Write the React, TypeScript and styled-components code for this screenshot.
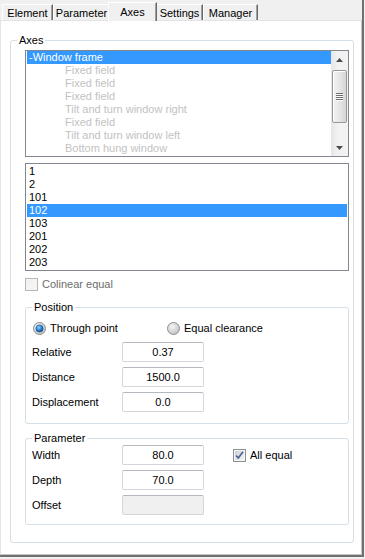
import React from "react";
import styled, { createGlobalStyle } from "styled-components";

const GlobalStyle = createGlobalStyle`
  html, body {
    margin: 0;
    padding: 0;
    background: #f0f0f0;
  }
  body {
    font-family: "Liberation Sans", Arial, sans-serif;
    font-size: 11px;
    color: #000;
  }
`;

interface TreeItem {
  label: string;
  level: number;
}

const treeItems: TreeItem[] = [
  { label: "-Window frame", level: 0 },
  { label: "Fixed field", level: 1 },
  { label: "Fixed field", level: 1 },
  { label: "Fixed field", level: 1 },
  { label: "Tilt and turn window right", level: 1 },
  { label: "Fixed field", level: 1 },
  { label: "Tilt and turn window left", level: 1 },
  { label: "Bottom hung window", level: 1 },
];

const axisNumbers: string[] = ["1", "2", "101", "102", "103", "201", "202", "203"];

const tabs = [
  { label: "Element", width: 51 },
  { label: "Parameter", width: 57 },
  { label: "Axes", width: 46 },
  { label: "Settings", width: 47 },
  { label: "Manager", width: 55 },
];

const Window = styled.div`
  width: 364px;
  height: 557px;
  box-sizing: border-box;
  border-right: 2px solid #707070;
  border-bottom: 2px solid #707070;
  display: flex;
  flex-direction: column;
`;

const TabStrip = styled.div`
  height: 20px;
  padding-left: 2px;
  display: flex;
  align-items: flex-end;
  position: relative;
  z-index: 1;
`;

const Tab = styled.div<{ $active?: boolean; $width: number }>`
  box-sizing: border-box;
  width: ${(p) => (p.$active ? p.$width + 3 : p.$width)}px;
  height: ${(p) => (p.$active ? 19 : 16)}px;
  margin: ${(p) => (p.$active ? "0 -1px -1px -2px" : "0")};
  background: #f0f0f0;
  border-top: 1px solid #fff;
  border-left: 1px solid #fff;
  border-right: 1px solid #6a6a6a;
  box-shadow: inset -1px 0 0 #a0a0a0;
  display: flex;
  align-items: center;
  justify-content: center;
  line-height: 13px;
  padding-top: ${(p) => (p.$active ? 0 : 1)}px;
  position: relative;
  z-index: ${(p) => (p.$active ? 2 : 1)};
`;

const Panel = styled.div`
  flex: 1;
  box-sizing: border-box;
  background: #fff;
  border-top: 1px solid #e3e3e3;
  border-left: 1px solid #e3e3e3;
  border-right: 1px solid #c4c4c4;
  border-bottom: 1px solid #c4c4c4;
  padding: 13px 0 0 9px;
`;

const GroupBox = styled.fieldset<{ $width: number; $pt: number; $pr: number; $pb: number }>`
  width: ${(p) => p.$width}px;
  box-sizing: border-box;
  margin: 0;
  min-width: 0;
  border: 1px solid #d5dfe5;
  border-radius: 3px;
  padding: ${(p) => `${p.$pt}px ${p.$pr}px ${p.$pb}px 6px`};
`;

const Caption = styled.legend`
  padding: 0 2px;
  line-height: 13px;
  font-size: 11px;
  font-weight: normal;
  color: #000;
`;

const AxesBody = styled.div`
  margin-left: 8px;
  display: flex;
  flex-direction: column;
`;

const ListFrame = styled.div<{ $height: number; $pad: number }>`
  box-sizing: border-box;
  height: ${(p) => p.$height}px;
  border: 1px solid #828790;
  background: #fff;
  display: flex;
  padding: ${(p) => `${p.$pad}px 0 0 1px`};
  overflow: hidden;
`;

const ListItems = styled.div`
  flex: 1;
  display: flex;
  flex-direction: column;
`;

const ListRow = styled.div<{ $selected?: boolean; $indent?: number; $muted?: boolean }>`
  height: 13px;
  line-height: 13px;
  padding-left: ${(p) => 2 + (p.$indent || 0)}px;
  background: ${(p) => (p.$selected ? "#3399ff" : "transparent")};
  color: ${(p) => (p.$selected ? "#fff" : p.$muted ? "#c2c2c2" : "#000")};
  white-space: nowrap;
  margin-right: ${(p) => (p.$muted !== undefined ? 0 : 1)}px;
`;

const ScrollBar = styled.div`
  width: 17px;
  display: flex;
  flex-direction: column;
  background: linear-gradient(to right, #e6e6e6, #f2f2f2 40%, #f2f2f2);
`;

const ArrowButton = styled.div`
  height: 17px;
  display: flex;
  align-items: center;
  justify-content: center;
`;

const Track = styled.div`
  flex: 1;
  padding: 2px 1px 0 1px;
`;

const Thumb = styled.div`
  box-sizing: border-box;
  height: 53px;
  border: 1px solid #979797;
  border-radius: 2px;
  background: linear-gradient(to right, #f3f3f3, #e6e6e6 50%, #d5d5d5);
  box-shadow: inset 1px 1px 0 #fff;
  display: flex;
  align-items: center;
  justify-content: center;
`;

const CheckRow = styled.label<{ $disabled?: boolean }>`
  display: flex;
  align-items: center;
  gap: 4px;
  height: 13px;
  line-height: 13px;
  color: ${(p) => (p.$disabled ? "#6d6d6d" : "#000")};
`;

const RadioRow = styled.div`
  display: flex;
  height: 13px;
  margin-left: 1px;
  margin-bottom: 7px;
`;

const RadioOption = styled.label<{ $width?: number }>`
  display: flex;
  align-items: center;
  gap: 4px;
  line-height: 13px;
  width: ${(p) => (p.$width ? `${p.$width}px` : "auto")};
`;

const FieldStack = styled.div`
  display: flex;
  flex-direction: column;
  gap: 5px;
`;

const FieldRow = styled.div`
  display: flex;
  align-items: center;
  height: 20px;
`;

const FieldLabel = styled.span`
  width: 90px;
  line-height: 13px;
`;

const ValueBox = styled.div<{ $disabled?: boolean }>`
  box-sizing: border-box;
  width: 82px;
  height: 20px;
  border: 1px solid #d4d6dc;
  border-top-color: #b5b8bf;
  border-radius: 2px;
  background: ${(p) => (p.$disabled ? "#f0f0f0" : "#fff")};
  text-align: center;
  line-height: 18px;
`;

const SideCheck = styled.div`
  margin-left: 29px;
`;

const Spacer = styled.div<{ $h: number }>`
  height: ${(p) => p.$h}px;
  flex-shrink: 0;
`;

const ArrowUp = () => (
  <svg width="7" height="4" viewBox="0 0 7 4">
    <path d="M3.5 0 L7 4 L0 4 Z" fill="#4d4d4d" />
  </svg>
);

const ArrowDown = () => (
  <svg width="7" height="4" viewBox="0 0 7 4">
    <path d="M0 0 L7 0 L3.5 4 Z" fill="#4d4d4d" />
  </svg>
);

const Grip = () => (
  <svg width="7" height="8" viewBox="0 0 7 8">
    {[0, 2, 4, 6].map((y) => (
      <g key={y}>
        <rect x="0" y={y} width="7" height="1" fill="#6e6e6e" />
        <rect x="0" y={y + 1} width="7" height="1" fill="#fcfcfc" />
      </g>
    ))}
  </svg>
);

const CheckBox: React.FC<{ checked?: boolean; disabled?: boolean }> = ({ checked, disabled }) => (
  <svg width="13" height="13" viewBox="0 0 13 13">
    <defs>
      <linearGradient id={`cb-${checked ? "on" : "off"}`} x1="0" y1="0" x2="1" y2="1">
        <stop offset="0" stopColor={disabled ? "#f0f0f0" : "#cdd0d6"} />
        <stop offset="1" stopColor={disabled ? "#f7f7f7" : "#f5f5f5"} />
      </linearGradient>
    </defs>
    <rect x="0.5" y="0.5" width="12" height="12" fill="#f4f4f4" stroke={disabled ? "#b7b7b7" : "#8e8f8f"} />
    <rect x="2" y="2" width="9" height="9" fill={`url(#cb-${checked ? "on" : "off"})`} />
    {checked && (
      <path d="M3 6.5 L5.3 9 L10 2.8" fill="none" stroke="#4a5f97" strokeWidth="1.6" />
    )}
  </svg>
);

const Radio: React.FC<{ checked?: boolean }> = ({ checked }) => (
  <svg width="13" height="13" viewBox="0 0 13 13">
    <defs>
      <radialGradient id="rb-bg" cx="0.4" cy="0.35" r="0.7">
        <stop offset="0" stopColor="#f6f6f6" />
        <stop offset="1" stopColor="#bfbfbf" />
      </radialGradient>
      <radialGradient id="rb-dot" cx="0.4" cy="0.35" r="0.7">
        <stop offset="0" stopColor="#8fd0ff" />
        <stop offset="0.5" stopColor="#2c8ee0" />
        <stop offset="1" stopColor="#0b3d73" />
      </radialGradient>
    </defs>
    <circle cx="6.5" cy="6.5" r="6" fill="url(#rb-bg)" stroke="#8e8f8f" />
    {checked && <circle cx="6.5" cy="6.5" r="3.6" fill="url(#rb-dot)" stroke="#1c4f7e" strokeWidth="0.6" />}
  </svg>
);

const App: React.FC = () => {
  return (
    <>
      <GlobalStyle />
      <Window>
        <TabStrip>
          {tabs.map((t) => (
            <Tab key={t.label} $width={t.width} $active={t.label === "Axes"}>
              {t.label}
            </Tab>
          ))}
        </TabStrip>
        <Panel>
          <GroupBox $width={344} $pt={3} $pr={4} $pb={17}>
            <Caption>Axes</Caption>
            <AxesBody>
              <ListFrame $height={107} $pad={0}>
                <ListItems>
                  {treeItems.map((item, i) => (
                    <ListRow
                      key={i}
                      $selected={i === 0}
                      $muted={i !== 0}
                      $indent={item.level * 36}
                    >
                      {item.label}
                    </ListRow>
                  ))}
                </ListItems>
                <ScrollBar>
                  <ArrowButton>
                    <ArrowUp />
                  </ArrowButton>
                  <Track>
                    <Thumb>
                      <Grip />
                    </Thumb>
                  </Track>
                  <ArrowButton>
                    <ArrowDown />
                  </ArrowButton>
                </ScrollBar>
              </ListFrame>
              <Spacer $h={6} />
              <ListFrame $height={108} $pad={1}>
                <ListItems>
                  {axisNumbers.map((n) => (
                    <ListRow key={n} $selected={n === "102"}>
                      {n}
                    </ListRow>
                  ))}
                </ListItems>
              </ListFrame>
              <Spacer $h={7} />
              <CheckRow $disabled>
                <CheckBox disabled />
                Colinear equal
              </CheckRow>
              <Spacer $h={10} />
              <GroupBox $width={324} $pt={8} $pr={6} $pb={11}>
                <Caption>Position</Caption>
                <RadioRow>
                  <RadioOption $width={134}>
                    <Radio checked />
                    Through point
                  </RadioOption>
                  <RadioOption>
                    <Radio />
                    Equal clearance
                  </RadioOption>
                </RadioRow>
                <FieldStack>
                  <FieldRow>
                    <FieldLabel>Relative</FieldLabel>
                    <ValueBox>0.37</ValueBox>
                  </FieldRow>
                  <FieldRow>
                    <FieldLabel>Distance</FieldLabel>
                    <ValueBox>1500.0</ValueBox>
                  </FieldRow>
                  <FieldRow>
                    <FieldLabel>Displacement</FieldLabel>
                    <ValueBox>0.0</ValueBox>
                  </FieldRow>
                </FieldStack>
              </GroupBox>
              <Spacer $h={8} />
              <GroupBox $width={324} $pt={0} $pr={6} $pb={9}>
                <Caption>Parameter</Caption>
                <FieldStack>
                  <FieldRow>
                    <FieldLabel>Width</FieldLabel>
                    <ValueBox>80.0</ValueBox>
                    <SideCheck>
                      <CheckRow>
                        <CheckBox checked />
                        All equal
                      </CheckRow>
                    </SideCheck>
                  </FieldRow>
                  <FieldRow>
                    <FieldLabel>Depth</FieldLabel>
                    <ValueBox>70.0</ValueBox>
                  </FieldRow>
                  <FieldRow>
                    <FieldLabel>Offset</FieldLabel>
                    <ValueBox $disabled />
                  </FieldRow>
                </FieldStack>
              </GroupBox>
            </AxesBody>
          </GroupBox>
        </Panel>
      </Window>
    </>
  );
};

export default App;
